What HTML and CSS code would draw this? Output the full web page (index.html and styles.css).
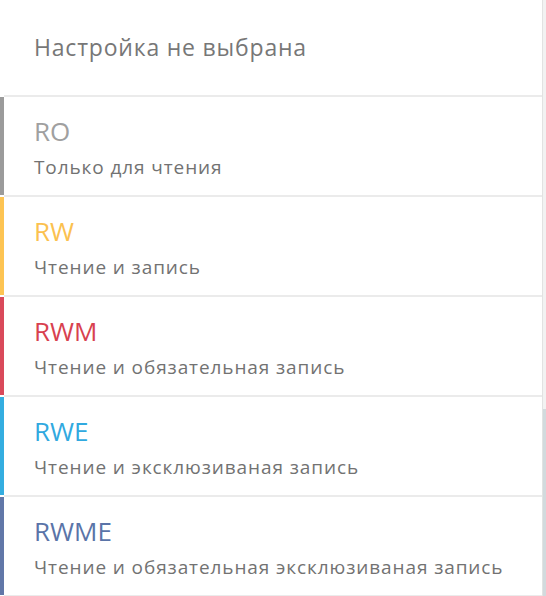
FILE: index.html
```html
<!DOCTYPE html>
<html lang="ru">
<head>
<meta charset="utf-8">
<link rel="stylesheet" href="styles.css">
</head>
<body>
<div class="page">
  <div class="list">
    <div class="item header">
      <div class="bar"></div>
      <div class="body"><span class="placeholder">Настройка не выбрана</span></div>
    </div>
    <div class="item ro">
      <div class="bar"></div>
      <div class="body"><div class="title">RO</div><div class="desc">Только для чтения</div></div>
    </div>
    <div class="item rw">
      <div class="bar"></div>
      <div class="body"><div class="title">RW</div><div class="desc">Чтение и запись</div></div>
    </div>
    <div class="item rwm">
      <div class="bar"></div>
      <div class="body"><div class="title">RWM</div><div class="desc">Чтение и обязательная запись</div></div>
    </div>
    <div class="item rwe">
      <div class="bar"></div>
      <div class="body"><div class="title">RWE</div><div class="desc">Чтение и эксклюзиваная запись</div></div>
    </div>
    <div class="item rwme">
      <div class="bar"></div>
      <div class="body"><div class="title">RWME</div><div class="desc">Чтение и обязательная эксклюзиваная запись</div></div>
    </div>
  </div>
  <div class="scroll"><div class="thumb"></div></div>
</div>
</body>
</html>
```

FILE: styles.css
```css
html, body {
  margin: 0;
  padding: 0;
  background: #ffffff;
}
body {
  font-family: "Open Sans", "Liberation Sans", sans-serif;
  overflow: hidden;
}
.page {
  display: flex;
  height: 596px;
  overflow: hidden;
}
.list {
  flex: 1;
  display: flex;
  flex-direction: column;
  border-right: 1px solid #e2e2e2;
  overflow: hidden;
}
.item {
  display: flex;
  flex-shrink: 0;
}
.bar {
  width: 4px;
  margin-bottom: 2px;
  flex-shrink: 0;
}
.body {
  flex: 1;
  border-bottom: 2px solid #ebebeb;
  padding-left: 30px;
  box-sizing: border-box;
}
.header .body {
  height: 97px;
  display: flex;
  align-items: center;
  padding-bottom: 2px;
}
.placeholder {
  font-size: 23px;
  letter-spacing: 0.8px;
  color: #777777;
}
.item:not(.header) .body {
  height: 100px;
  padding-top: 19px;
}
.title {
  font-size: 26px;
  line-height: 30px;
}
.desc {
  font-size: 19px;
  letter-spacing: 0.9px;
  line-height: 22px;
  margin-top: 10px;
  color: #727272;
}
.ro .bar { background: #9b9b9b; }
.ro .title { color: #a0a0a0; }
.rw .bar { background: #fdc453; }
.rw .title { color: #fbc14f; }
.rwm .bar { background: #d9495a; }
.rwm .title { color: #d8414f; }
.rwe .bar { background: #34ade0; }
.rwe .title { color: #31a9df; }
.rwme .bar { background: #6177a8; }
.rwme .title { color: #5a74a8; }
.scroll {
  width: 3px;
  background: #f2f2f2;
  display: flex;
  flex-direction: column;
  justify-content: flex-end;
}
.thumb {
  height: 187px;
  background: #d2dadd;
}
```
